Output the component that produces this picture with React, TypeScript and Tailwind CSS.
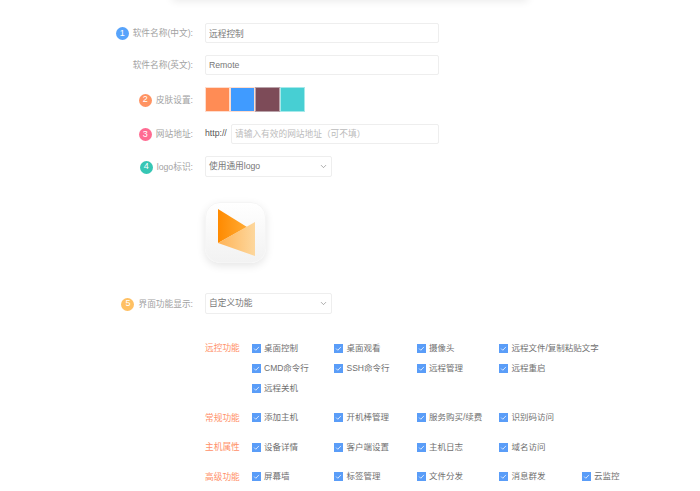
import React from "react";
import { ChevronDown } from "lucide-react";

const font = { fontFamily: '"Liberation Sans","Noto Sans CJK SC",sans-serif' };

function Badge({ n, color }: { n: number; color: string }) {
  return (
    <span
      className="mr-[4px] flex h-[13px] w-[13px] shrink-0 items-center justify-center rounded-full text-[9px] text-white"
      style={{ backgroundColor: color }}
    >
      {n}
    </span>
  );
}

function Row({
  label,
  badge,
  color,
  className,
  children,
}: {
  label: string;
  badge?: number;
  color?: string;
  className?: string;
  children: React.ReactNode;
}) {
  return (
    <div className={`flex items-center ${className ?? ""}`}>
      <div className="flex w-[193px] shrink-0 items-center justify-end pt-[1.5px] text-[8.7px] text-[#a3a3a3]">
        {badge ? <Badge n={badge} color={color!} /> : null}
        <span className="whitespace-nowrap">{label}:</span>
      </div>
      <div className="ml-[12px] flex items-center">{children}</div>
    </div>
  );
}

function Select({ value }: { value: string }) {
  return (
    <div className="flex h-[21px] w-[127px] items-center justify-between rounded-[2px] border border-[#eeeeee] bg-white pl-[3px] pr-[3px] text-[8.7px] text-[#777777]">
      <span>{value}</span>
      <ChevronDown size={9} strokeWidth={1.6} color="#777777" />
    </div>
  );
}

function Check({ label }: { label: string }) {
  return (
    <div className="flex h-[20px] items-center whitespace-nowrap text-[8.5px] text-[#707070]">
      <span className="mr-[3.5px] flex h-[9px] w-[9px] shrink-0 items-center justify-center bg-[#5a9df8]">
        <svg width="7" height="7" viewBox="0 0 8 8" fill="none">
          <path d="M1.3 4.1 L3.2 6 L6.8 2.2" stroke="#dbe9fd" strokeWidth="1.1" />
        </svg>
      </span>
      {label}
    </div>
  );
}

function Group({ title, items }: { title: string; items: string[] }) {
  return (
    <div className="flex">
      <div className="flex h-[20px] w-[46.5px] shrink-0 items-center pt-[1.5px] text-[8.7px] text-[#ff9068]">{title}</div>
      <div className="grid grid-cols-[repeat(5,82.5px)]">
        {items.map((t, i) => (t ? <Check key={t} label={t} /> : <div key={i} />))}
      </div>
    </div>
  );
}

export default function App() {
  return (
    <div className="h-[491px] w-[700px] overflow-hidden bg-white" style={font}>
      <div className="ml-[172px] mt-[-10px] h-[10px] w-[356px] bg-white shadow-[0_1px_8px_rgba(0,0,0,0.09)]" />
      <div className="flex flex-col pt-[23px]">
        <Row label="软件名称(中文)" badge={1} color="#57a3fb">
          <input
            readOnly
            value="远程控制"
            className="h-[20px] w-[234px] rounded-[2px] border border-[#eeeeee] px-[3px] text-[8.7px] text-[#777777] outline-none"
          />
        </Row>
        <Row label="软件名称(英文)" className="mt-[12px]">
          <input
            readOnly
            value="Remote"
            className="h-[20px] w-[234px] rounded-[2px] border border-[#eeeeee] px-[3px] text-[8.7px] text-[#777777] outline-none"
          />
        </Row>
        <Row label="皮肤设置" badge={2} color="#ff9362" className="mt-[12px]">
          <div className="flex">
            <span className="h-[25px] w-[25px] border-[1.5px] border-[#ffdccd] bg-[#ff8c55]" />
            <span className="h-[25px] w-[25px] border-[1.5px] border-[#ffdccd] bg-[#409bff]" />
            <span className="h-[25px] w-[25px] border border-[#b9a3aa] bg-[#7d4b58]" />
            <span className="h-[25px] w-[25px] border border-[#a6e9ea] bg-[#47cfd3]" />
          </div>
        </Row>
        <Row label="网站地址" badge={3} color="#ff6b92" className="mt-[12px]">
          <span className="mr-[4px] w-[22px] text-[8.7px] text-[#555555]">http://</span>
          <input
            readOnly
            placeholder="请输入有效的网站地址（可不填）"
            className="h-[20px] w-[208px] rounded-[2px] border border-[#eeeeee] px-[3px] text-[8.7px] text-[#666666] outline-none placeholder:text-[#bbbbbb]"
          />
        </Row>
        <Row label="logo标识" badge={4} color="#36c6b4" className="mt-[12px]">
          <Select value="使用通用logo" />
        </Row>
        <div className="ml-[205px] mt-[25px] h-[61px] w-[61px] rounded-[15px] border border-[#f5f5f5] bg-gradient-to-b from-white to-[#f2f2f2] shadow-[0_3px_8px_rgba(0,0,0,0.1)]">
          <svg width="59" height="59" viewBox="0 0 59 59">
            <defs>
              <linearGradient id="a" x1="0" x2="1" y1="0" y2="0">
                <stop offset="0" stopColor="#ff8a00" />
                <stop offset="1" stopColor="#ffab35" />
              </linearGradient>
              <linearGradient id="b" x1="0" x2="1" y1="0" y2="0">
                <stop offset="0" stopColor="#ffb356" />
                <stop offset="1" stopColor="#fdd79d" />
              </linearGradient>
            </defs>
            <path d="M12 6 L12 40 L41 24 Z" fill="url(#a)" />
            <path d="M12 40 L49 19 L49 53 Z" fill="url(#b)" />
          </svg>
        </div>
        <Row label="界面功能显示" badge={5} color="#ffc063" className="mt-[30px]">
          <Select value="自定义功能" />
        </Row>
        <div className="ml-[205px] mt-[24px] flex flex-col gap-[9.5px]">
          <Group
            title="远控功能"
            items={[
              "桌面控制",
              "桌面观看",
              "摄像头",
              "远程文件/复制粘贴文字",
              "",
              "CMD命令行",
              "SSH命令行",
              "远程管理",
              "远程重启",
              "",
              "远程关机",
            ]}
          />
          <Group title="常规功能" items={["添加主机", "开机棒管理", "服务购买/续费", "识别码访问"]} />
          <Group title="主机属性" items={["设备详情", "客户端设置", "主机日志", "域名访问"]} />
          <Group title="高级功能" items={["屏幕墙", "标签管理", "文件分发", "消息群发", "云监控"]} />
        </div>
      </div>
    </div>
  );
}
